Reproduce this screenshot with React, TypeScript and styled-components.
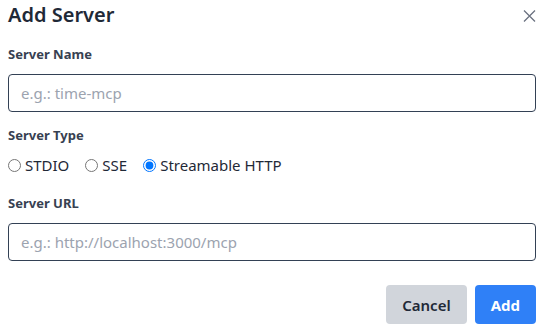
import React from "react";
import styled, { createGlobalStyle } from "styled-components";

const Global = createGlobalStyle`
  html, body { margin: 0; padding: 0; background: #ffffff; }
  body { font-family: "Noto Sans", "Open Sans", sans-serif; }
  * { box-sizing: border-box; }
`;

const Dialog = styled.div`
  width: 548px;
  height: 334px;
  padding: 0 12px 0 8px;
  display: flex;
  flex-direction: column;
  background: #ffffff;
`;

const Header = styled.div`
  display: flex;
  justify-content: space-between;
  align-items: flex-start;
  height: 30px;
  padding-top: 1px;
`;

const Title = styled.h2`
  margin: 0;
  font-size: 20px;
  font-weight: 600;
  line-height: 28px;
  color: #1f2937;
`;

const CloseButton = styled.button`
  border: none;
  background: transparent;
  padding: 0;
  margin: 9px 0 0 0;
  width: 13px;
  height: 12px;
  display: flex;
  cursor: pointer;
`;

const Field = styled.div<{ $top: number }>`
  display: flex;
  flex-direction: column;
  margin-top: ${(p) => p.$top}px;
`;

const Label = styled.label`
  font-size: 13px;
  font-weight: 700;
  line-height: 18px;
  color: #374151;
`;

const Input = styled.input`
  margin-top: 11px;
  height: 38px;
  width: 100%;
  border: 1px solid #334155;
  border-radius: 4px;
  padding: 0 12px;
  font-family: inherit;
  font-size: 15px;
  color: #111827;
  outline: none;
  &::placeholder { color: #9ca3af; }
`;

const RadioRow = styled.div`
  display: flex;
  align-items: center;
  gap: 16px;
  margin-top: 11px;
  height: 20px;
`;

const RadioOption = styled.label`
  display: flex;
  align-items: center;
  gap: 4px;
  font-size: 15px;
  color: #1f2937;
  line-height: 20px;
`;

const Radio = styled.input`
  margin: 0;
  width: 13px;
  height: 13px;
`;

const Footer = styled.div`
  display: flex;
  justify-content: flex-end;
  gap: 8px;
  margin-top: 24px;
`;

const Button = styled.button<{ $primary?: boolean }>`
  height: 39px;
  padding: 0 16px;
  border: none;
  border-radius: 4px;
  font-family: inherit;
  font-size: 15px;
  font-weight: ${(p) => (p.$primary ? 700 : 600)};
  background: ${(p) => (p.$primary ? "#2f80f7" : "#d1d5db")};
  color: ${(p) => (p.$primary ? "#ffffff" : "#1f2937")};
  cursor: pointer;
`;

export default function App() {
  return (
    <>
      <Global />
      <Dialog>
        <Header>
          <Title>Add Server</Title>
          <CloseButton aria-label="Close">
            <svg width="13" height="12" viewBox="0 0 13 12">
              <path d="M1 0.5 L12 11.5 M12 0.5 L1 11.5" stroke="#6b7280" strokeWidth="1.3" fill="none" />
            </svg>
          </CloseButton>
        </Header>
        <Field $top={15}>
          <Label>Server Name</Label>
          <Input placeholder="e.g.: time-mcp" />
        </Field>
        <Field $top={14}>
          <Label>Server Type</Label>
          <RadioRow>
            <RadioOption><Radio type="radio" name="t" />STDIO</RadioOption>
            <RadioOption><Radio type="radio" name="t" />SSE</RadioOption>
            <RadioOption><Radio type="radio" name="t" defaultChecked />Streamable HTTP</RadioOption>
          </RadioRow>
        </Field>
        <Field $top={19}>
          <Label>Server URL</Label>
          <Input placeholder="e.g.: http://localhost:3000/mcp" />
        </Field>
        <Footer>
          <Button>Cancel</Button>
          <Button $primary>Add</Button>
        </Footer>
      </Dialog>
    </>
  );
}
